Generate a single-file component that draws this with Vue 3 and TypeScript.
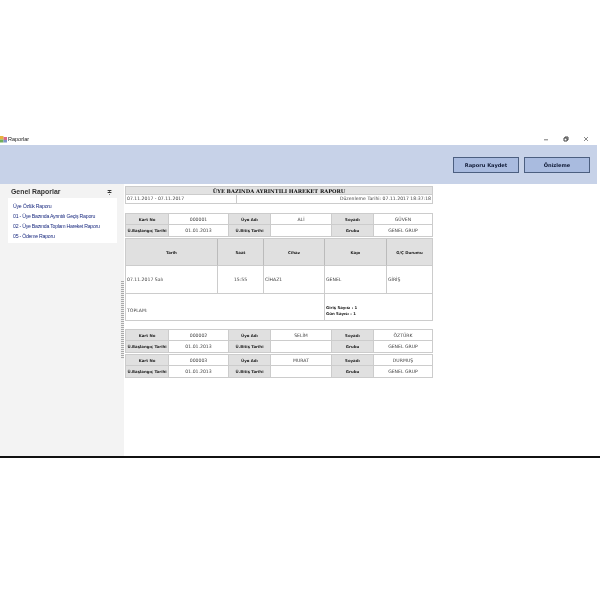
<script setup lang="ts">
interface Member { card: string; name: string; surname: string }
const members: Member[] = [
  { card: '000001', name: 'ALİ', surname: 'GÜVEN' },
  { card: '000002', name: 'SELİM', surname: 'ÖZTÜRK' },
  { card: '000003', name: 'MURAT', surname: 'DURMUŞ' },
]
const links = ['Üye Özlük Raporu', '01 - Üye Bazında Ayrıntılı Geçiş Raporu', '02 - Üye Bazında Toplam Hareket Raporu', '05 - Ödeme Raporu']
</script>

<template>
  <div class="page">
    <div class="window">
      <div class="titlebar">
        <svg class="appicon" width="7" height="7" viewBox="0 0 7 7"><rect width="3.5" height="3.5" fill="#e8b23c"/><rect x="3.5" y="1" width="3.5" height="3" fill="#d76a8a"/><rect y="3.5" width="3.5" height="3" fill="#6fae5a"/><rect x="3.5" y="4" width="3.5" height="2.5" fill="#7d93c9"/></svg>
        <span class="wintitle">Raporlar</span>
        <div class="controls">
          <svg width="5" height="5" viewBox="0 0 5 5"><path d="M0 2.8H4" stroke="#555" stroke-width=".8"/></svg>
          <svg width="6" height="6" viewBox="0 0 6 6"><path d="M1 2H4V5H1ZM2 2V1H5V4H4" fill="none" stroke="#444" stroke-width="1"/></svg>
          <svg width="6" height="6" viewBox="0 0 6 6"><path d="M1 1L5 5M5 1L1 5" stroke="#555" stroke-width=".7"/></svg>
        </div>
      </div>
      <div class="toolbar">
        <button class="tool-btn">Raporu Kaydet</button>
        <button class="tool-btn">Önizleme</button>
      </div>
      <div class="main">
        <aside class="sidebar">
          <div class="side-head"><span>Genel Raporlar</span><span class="chev">≑</span></div>
          <ul class="links">
            <li v-for="l in links" :key="l">{{ l }}</li>
          </ul>
        </aside>
        <div class="splitter"><div class="grip"></div></div>
        <section class="report">
          <div class="r-title">ÜYE BAZINDA AYRINTILI HAREKET RAPORU</div>
          <div class="r-dates">
            <div class="d-left">07.11.2017 - 07.11.2017</div>
            <div class="d-right">Düzenleme Tarihi: 07.11.2017 18:37:18</div>
          </div>

          <template v-for="(m, i) in members" :key="m.card">
            <div class="card" :class="'card-' + i">
              <div class="lbl">Kart No</div><div class="val">{{ m.card }}</div>
              <div class="lbl">Üye Adı</div><div class="val">{{ m.name }}</div>
              <div class="lbl">Soyadı</div><div class="val">{{ m.surname }}</div>
              <div class="lbl">Ü.Başlangıç Tarihi</div><div class="val">01.01.2013</div>
              <div class="lbl">Ü.Bitiş Tarihi</div><div class="val"></div>
              <div class="lbl">Grubu</div><div class="val">GENEL GRUP</div>
            </div>
            <div v-if="i === 0" class="detail">
              <div class="th">Tarih</div><div class="th">Saat</div><div class="th">Cihaz</div><div class="th">Kapı</div><div class="th">G/Ç Durumu</div>
              <div class="td">07.11.2017 Salı</div><div class="td center">15:55</div><div class="td">CİHAZ1</div><div class="td">GENEL</div><div class="td">GİRİŞ</div>
              <div class="td total-l">TOPLAM:</div>
              <div class="td total-r"><b>Giriş Sayısı : 1<br>Gün Sayısı : 1</b></div>
            </div>
          </template>
        </section>
      </div>
    </div>
  </div>
</template>

<style>
html, body { margin: 0; background: #fff; }
</style>

<style scoped>
.page { width: 600px; height: 600px; padding-top: 133px; box-sizing: border-box; background: #fff; font-family: "DejaVu Sans", sans-serif; overflow: hidden; }
.window { height: 325px; display: flex; flex-direction: column; border-bottom: 2px solid #111; box-sizing: border-box; }
.titlebar { height: 12px; flex: none; display: flex; align-items: center; font-family: "Liberation Sans", sans-serif; filter: blur(.25px); }
.appicon { margin-right: 1px; }
.wintitle { font-size: 5.5px; color: #222; }
.controls { margin-left: auto; display: flex; gap: 14px; align-items: center; padding-right: 11px; }
.toolbar { height: 39px; width: 597px; background: #c7d2e8; display: flex; justify-content: flex-end; align-items: center; gap: 5px; padding: 1px 7px 0 0; box-sizing: border-box; flex: none; filter: blur(.25px); }
.tool-btn { width: 66px; height: 16px; padding: 0; border: 1px solid #4c5f80; background: #a9bbdf; color: #101a36; font: bold 5.1px "DejaVu Sans", sans-serif; }
.main { flex: 1; display: flex; min-height: 0; filter: blur(.25px); }
.sidebar { width: 121px; background: #f3f3f3; padding: 0 4px 0 8px; box-sizing: border-box; flex: none; }
.side-head { height: 14px; padding: 0 5px 0 3px; display: flex; justify-content: space-between; align-items: center; font: bold 6.9px "Liberation Sans", sans-serif; color: #333; }
.chev { font-size: 6px; font-weight: 400; }
.links { list-style: none; margin: 0; height: 45px; background: #fff; padding: 2.5px 0 0 5px; box-sizing: border-box; font: 5.2px/10px "Liberation Sans", sans-serif; letter-spacing: -.25px; color: #1c2c80; white-space: nowrap; }
.splitter { width: 3px; margin-right: 1px; background: #f3f3f3; display: flex; align-items: center; flex: none; }
.grip { width: 3px; height: 78px; background: repeating-linear-gradient(to bottom, #aaa 0 1px, #eee 1px 2px); }
.report { width: 308px; padding-top: 2px; font-size: 4.6px; color: #444; }
.r-title { height: 9px; background: #e2e2e2; border: 1px solid #ccc; box-sizing: border-box; text-align: center; font: bold 5.15px/8px "DejaVu Serif", serif; color: #111; }
.r-dates { height: 9px; display: grid; grid-template-columns: 111px 1fr; border: 1px solid #ccc; border-top: 0; box-sizing: border-box; line-height: 8px; }
.d-left { padding-left: 1px; border-right: 1px solid #ccc; }
.d-right { text-align: right; padding-right: 1px; }
.card { display: grid; grid-template-columns: 43px 60px 42px 61px 42px 58px; grid-auto-rows: 11px; border: 1px solid #ccc; box-sizing: border-box; }
.card-0 { margin-top: 9px; }
.card-1 { margin-top: 8px; }
.card-2 { margin-top: 1px; }
.lbl, .val { display: flex; align-items: center; justify-content: center; box-sizing: border-box; white-space: nowrap; overflow: hidden; border-right: 1px solid #ccc; }
.lbl:nth-child(-n+6), .val:nth-child(-n+6) { border-bottom: 1px solid #ccc; }
.lbl { background: #e0e0e0; font-weight: 700; color: #222; font-size: 3.9px; }
.val:nth-child(6n) { border-right: 0; }
.detail { display: grid; grid-template-columns: 92px 46px 61px 62px 45px; grid-template-rows: 27px 28px 26px; border: 1px solid #ccc; margin-top: 1px; box-sizing: border-box; }
.th { background: #e0e0e0; font-weight: 700; font-size: 3.9px; color: #222; display: flex; align-items: center; justify-content: center; border-right: 1px solid #bbb; border-bottom: 1px solid #ccc; }
.td { display: flex; align-items: center; padding-left: 1px; border-right: 1px solid #ccc; border-bottom: 1px solid #ccc; }
.th:nth-child(5), .td:nth-child(10) { border-right: 0; }
.center { justify-content: center; padding-left: 0; }
.total-l { grid-column-end: span 3; border-bottom: 0; padding-top: 6px; }
.total-r { grid-column-end: span 2; border-right: 0; border-bottom: 0; line-height: 5.5px; font-size: 3.9px; padding-top: 7px; color: #222; }
</style>
